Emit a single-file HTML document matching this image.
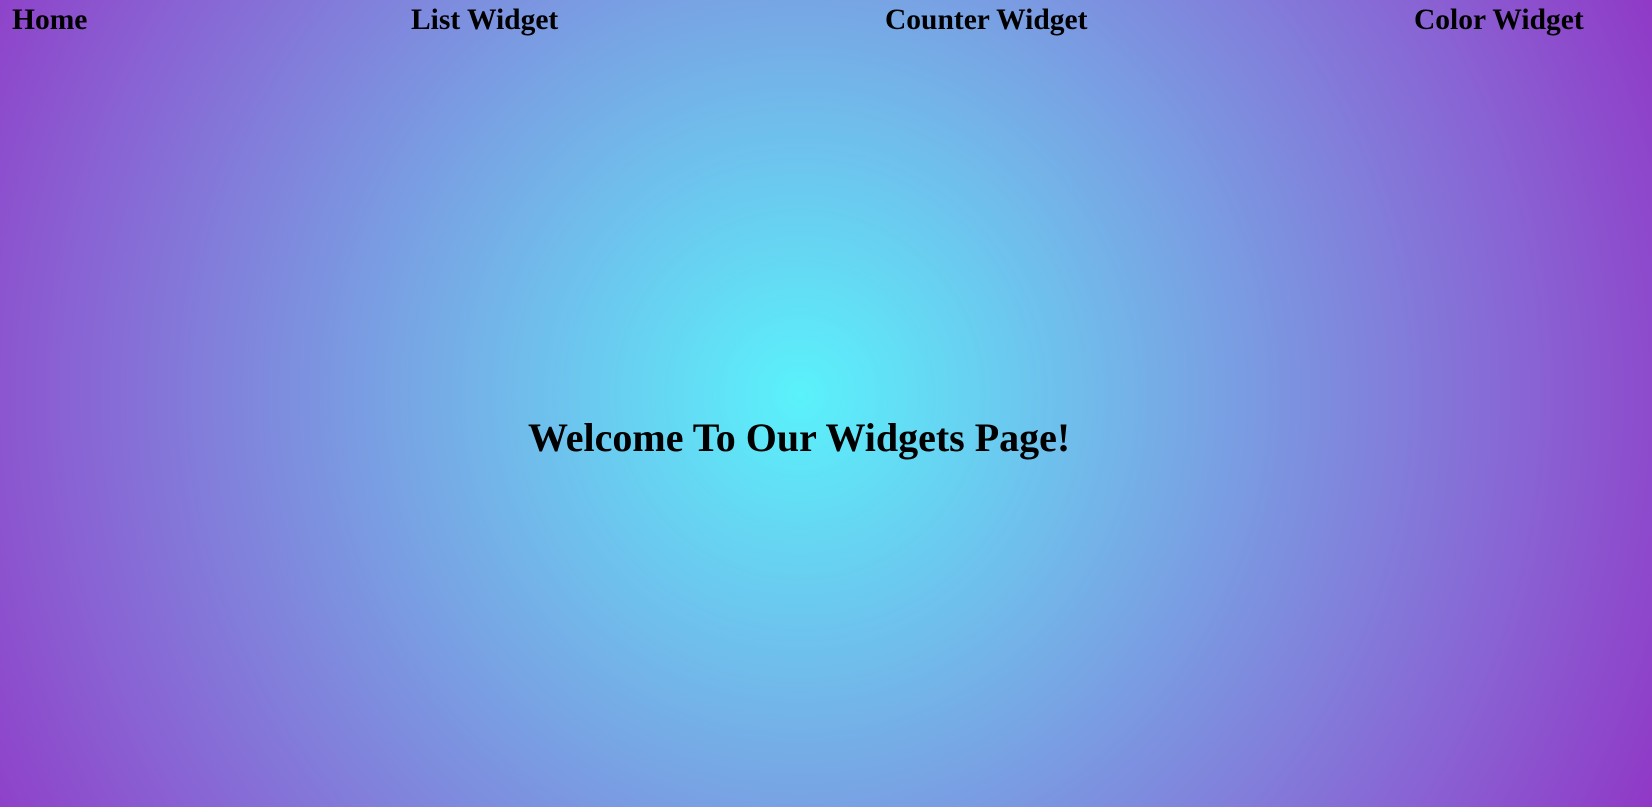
<!DOCTYPE html>
<html><head><style>
html,body{margin:0;padding:0;width:1652px;height:807px;overflow:hidden}
body{background:radial-gradient(circle farthest-corner at 800px 395px,#5af2fb 0%,#74b2e8 35%,#8a5ed2 80%,#9038c6 100%);font-family:"Liberation Serif",serif;font-weight:bold;color:#000;position:relative}
.n{position:absolute;top:1px;font-size:29.5px;line-height:38px;white-space:nowrap}
h1{position:absolute;margin:0;left:528px;top:413px;font-size:40px;line-height:50px;white-space:nowrap}
</style></head><body>
<div class="n" style="left:12px">Home</div>
<div class="n" style="left:411px">List Widget</div>
<div class="n" style="left:885px">Counter Widget</div>
<div class="n" style="left:1414px">Color Widget</div>
<h1>Welcome To Our Widgets Page!</h1>
</body></html>
